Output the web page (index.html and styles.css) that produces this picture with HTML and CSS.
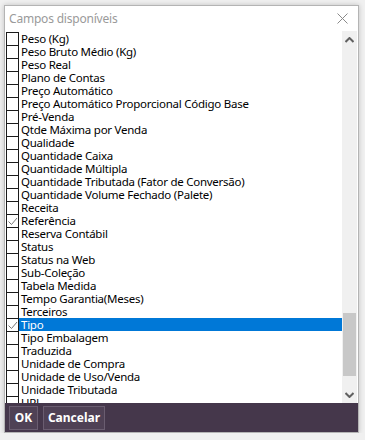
FILE: index.html
```html
<!DOCTYPE html>
<html>
<head>
    <title>Campos disponíveis</title>
    <link rel="stylesheet" href="styles.css">
</head>
<body>
    <div class="window">
        <div class="titlebar">
            <span class="title">Campos disponíveis</span>
            <svg class="close" width="11" height="11" viewBox="0 0 11 11">
                <path d="M0.5 0.5 L10.5 10.5 M10.5 0.5 L0.5 10.5" stroke="#8a8a8a" stroke-width="1" fill="none"/>
            </svg>
        </div>

        <div class="content">
            <div class="list">
                <div class="row"><span class="box"></span><span class="label">Peso (Kg)</span></div>
                <div class="row"><span class="box"></span><span class="label">Peso Bruto Médio (Kg)</span></div>
                <div class="row"><span class="box"></span><span class="label">Peso Real</span></div>
                <div class="row"><span class="box"></span><span class="label">Plano de Contas</span></div>
                <div class="row"><span class="box"></span><span class="label">Preço Automático</span></div>
                <div class="row"><span class="box"></span><span class="label">Preço Automático Proporcional Código Base</span></div>
                <div class="row"><span class="box"></span><span class="label">Pré-Venda</span></div>
                <div class="row"><span class="box"></span><span class="label">Qtde Máxima por Venda</span></div>
                <div class="row"><span class="box"></span><span class="label">Qualidade</span></div>
                <div class="row"><span class="box"></span><span class="label">Quantidade Caixa</span></div>
                <div class="row"><span class="box"></span><span class="label">Quantidade Múltipla</span></div>
                <div class="row"><span class="box"></span><span class="label">Quantidade Tributada (Fator de Conversão)</span></div>
                <div class="row"><span class="box"></span><span class="label">Quantidade Volume Fechado (Palete)</span></div>
                <div class="row"><span class="box"></span><span class="label">Receita</span></div>
                <div class="row"><span class="box checked"><svg width="11" height="11" viewBox="0 0 11 11"><path d="M1.5 5.5 L4.5 8.5 L10 2" stroke="#777" stroke-width="1" fill="none"/></svg></span><span class="label">Referência</span></div>
                <div class="row"><span class="box"></span><span class="label">Reserva Contábil</span></div>
                <div class="row"><span class="box"></span><span class="label">Status</span></div>
                <div class="row"><span class="box"></span><span class="label">Status na Web</span></div>
                <div class="row"><span class="box"></span><span class="label">Sub-Coleção</span></div>
                <div class="row"><span class="box"></span><span class="label">Tabela Medida</span></div>
                <div class="row"><span class="box"></span><span class="label">Tempo Garantia(Meses)</span></div>
                <div class="row"><span class="box"></span><span class="label">Terceiros</span></div>
                <div class="row selected"><span class="box checked"><svg width="11" height="11" viewBox="0 0 11 11"><path d="M1.5 5.5 L4.5 8.5 L10 2" stroke="#777" stroke-width="1" fill="none"/></svg></span><span class="label">Tipo</span></div>
                <div class="row"><span class="box"></span><span class="label">Tipo Embalagem</span></div>
                <div class="row"><span class="box"></span><span class="label">Traduzida</span></div>
                <div class="row"><span class="box"></span><span class="label">Unidade de Compra</span></div>
                <div class="row"><span class="box"></span><span class="label">Unidade de Uso/Venda</span></div>
                <div class="row"><span class="box"></span><span class="label">Unidade Tributada</span></div>
                <div class="row"><span class="box"></span><span class="label">URL</span></div>
            </div>

            <div class="scrollbar">
                <div class="arrow">
                    <svg width="9" height="6" viewBox="0 0 9 6"><path d="M0.5 5 L4.5 1 L8.5 5" stroke="#606060" stroke-width="2" fill="none"/></svg>
                </div>
                <div class="track">
                    <div class="thumb"></div>
                </div>
                <div class="arrow">
                    <svg width="9" height="6" viewBox="0 0 9 6"><path d="M0.5 1 L4.5 5 L8.5 1" stroke="#606060" stroke-width="2" fill="none"/></svg>
                </div>
            </div>
        </div>

        <div class="footer">
            <button class="btn btn-ok">OK</button>
            <button class="btn btn-cancel">Cancelar</button>
        </div>
    </div>
</body>
</html>
```

FILE: styles.css
```css
body {
    margin: 0;
    padding: 5px 0 0 4px;
    background-color: #f0f0f0;
    font-family: "Noto Sans", "Open Sans", sans-serif;
    font-size: 12px;
}

.window {
    width: 355px;
    height: 428px;
    box-sizing: border-box;
    background-color: #fff;
    border: 1px solid #b4b4b4;
    box-shadow: 0 0 5px rgba(0, 0, 0, 0.2);
    display: flex;
    flex-direction: column;
    overflow: hidden;
}

.titlebar {
    height: 25px;
    flex-shrink: 0;
    display: flex;
    align-items: center;
    justify-content: space-between;
    padding: 0 10px 0 4px;
}

.title {
    color: #9a9a9a;
    font-size: 12px;
    letter-spacing: -0.2px;
}

.content {
    flex: 1;
    display: flex;
    overflow: hidden;
}

.list {
    flex: 1;
    overflow: hidden;
    padding-top: 1px;
}

.row {
    display: flex;
    height: 13px;
    line-height: 13px;
    color: #000;
    white-space: nowrap;
}

.box {
    width: 13px;
    height: 14px;
    box-sizing: border-box;
    border: 1px solid #1a1a1a;
    background-color: #fff;
    flex-shrink: 0;
    margin-left: 1px;
    display: flex;
    align-items: center;
    justify-content: center;
}

.label {
    flex: 1;
    padding-left: 2px;
    font-size: 11.5px;
    letter-spacing: -0.25px;
}

.selected .label {
    background-color: #0078d7;
    color: #fff;
}

.scrollbar {
    width: 15px;
    background-color: #f0f0f0;
    display: flex;
    flex-direction: column;
    margin-right: 1px;
}

.arrow {
    height: 17px;
    display: flex;
    align-items: center;
    justify-content: center;
}

.track {
    flex: 1;
    position: relative;
}

.thumb {
    position: absolute;
    left: 1px;
    right: 1px;
    bottom: 10px;
    height: 63px;
    background-color: #c8c8c8;
}

.footer {
    height: 29px;
    flex-shrink: 0;
    background-color: #45374b;
    display: flex;
    align-items: center;
    gap: 5px;
    padding: 0 4px;
}

.btn {
    height: 24px;
    background-color: #4f4155;
    border: 1px solid #6a5d70;
    color: #fff;
    font-family: "Noto Sans", "Open Sans", sans-serif;
    font-size: 12px;
    font-weight: bold;
    padding: 0;
}

.btn-ok {
    width: 29px;
}

.btn-cancel {
    width: 62px;
}
```
